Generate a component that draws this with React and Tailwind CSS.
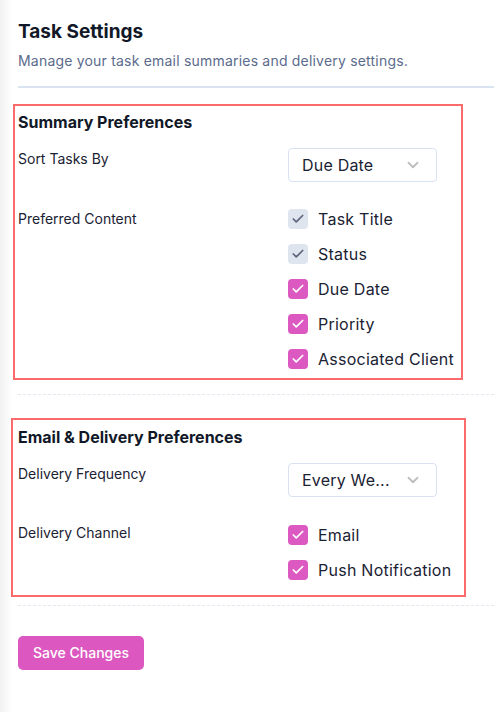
import { Check, ChevronDown } from 'lucide-react';

const CONTENT = [
  { label: 'Task Title', locked: true },
  { label: 'Status', locked: true },
  { label: 'Due Date' },
  { label: 'Priority' },
  { label: 'Associated Client' },
];

function Box({ locked }) {
  if (locked) {
    return (
      <span className="w-5 h-5 rounded-[4px] bg-[#dfe5ee] flex items-center justify-center shrink-0">
        <Check className="w-3.5 h-3.5 text-[#5d667a]" strokeWidth={3} />
      </span>
    );
  }
  return (
    <span className="w-5 h-5 rounded-[4px] bg-[#dc59c1] flex items-center justify-center shrink-0">
      <Check className="w-3.5 h-3.5 text-white" strokeWidth={3} />
    </span>
  );
}

function Item({ label, locked }) {
  return (
    <div className="flex items-center gap-2.5 h-[35px]">
      <Box locked={locked} />
      <span className="text-base tracking-[0.25px] text-[#1a2233]">{label}</span>
    </div>
  );
}

function Select({ value }) {
  return (
    <div className="w-[149px] h-[34px] border border-[#d7e2f2] rounded-[4px] bg-white flex items-center justify-between pl-[13px] pr-[14px]">
      <span className="text-base tracking-[0.2px] text-[#1a2233]">{value}</span>
      <ChevronDown className="w-[18px] h-[18px] text-[#bfbfbf]" strokeWidth={2.5} />
    </div>
  );
}

export default function App() {
  return (
    <div className="min-h-[712px] bg-[linear-gradient(to_right,#f1f1f1,#ffffff_12px)] font-['Inter',sans-serif] text-[#1a2233]">
      <div className="pl-[18px] pt-[18px]">
        <h1 className="text-[19px] leading-7 font-bold text-[#111827]">Task Settings</h1>
        <p className="mt-[5px] text-sm leading-5 tracking-[0.2px] text-[#5b6b8c]">Manage your task email summaries and delivery settings.</p>
        <div className="mt-[15px] border-t-2 border-[#d9e3f2]" />
      </div>

      <section className="mt-[16px] ml-[13px] w-[450px] border-2 border-[#fb6b6b] pl-[3px] pt-[4px] pb-[2px]">
        <h2 className="text-base leading-6 font-bold text-[#111827]">Summary Preferences</h2>
        <div className="mt-[14px] flex">
          <div className="w-[270px] pt-px text-sm leading-5">Sort Tasks By</div>
          <Select value="Due Date" />
        </div>
        <div className="mt-[19px] flex">
          <div className="w-[270px] pt-[8px] text-sm leading-5">Preferred Content</div>
          <div className="flex flex-col">
            {CONTENT.map((c) => <Item key={c.label} {...c} />)}
          </div>
        </div>
      </section>

      <div className="mt-[14px] ml-[18px] border-t border-dashed border-[#e4e7ef]" />

      <section className="mt-[23px] ml-[11px] w-[455px] border-2 border-[#fb6b6b] pl-[5px] pt-[5px] pb-[8px]">
        <h2 className="text-base leading-6 font-bold text-[#111827]">Email &amp; Delivery Preferences</h2>
        <div className="mt-[14px] flex">
          <div className="w-[270px] pt-px text-sm leading-5">Delivery Frequency</div>
          <Select value="Every We..." />
        </div>
        <div className="mt-[20px] flex">
          <div className="w-[270px] pt-[6px] text-sm leading-5">Delivery Channel</div>
          <div className="flex flex-col">
            <Item label="Email" />
            <Item label="Push Notification" />
          </div>
        </div>
      </section>

      <div className="mt-[8px] ml-[18px] border-t border-dashed border-[#e4e7ef]" />

      <div className="pl-[18px] pt-[30px]">
        <button className="h-[34px] px-[15px] rounded-[5px] bg-[#dc58c0] text-white text-sm font-medium">Save Changes</button>
      </div>
    </div>
  );
}
